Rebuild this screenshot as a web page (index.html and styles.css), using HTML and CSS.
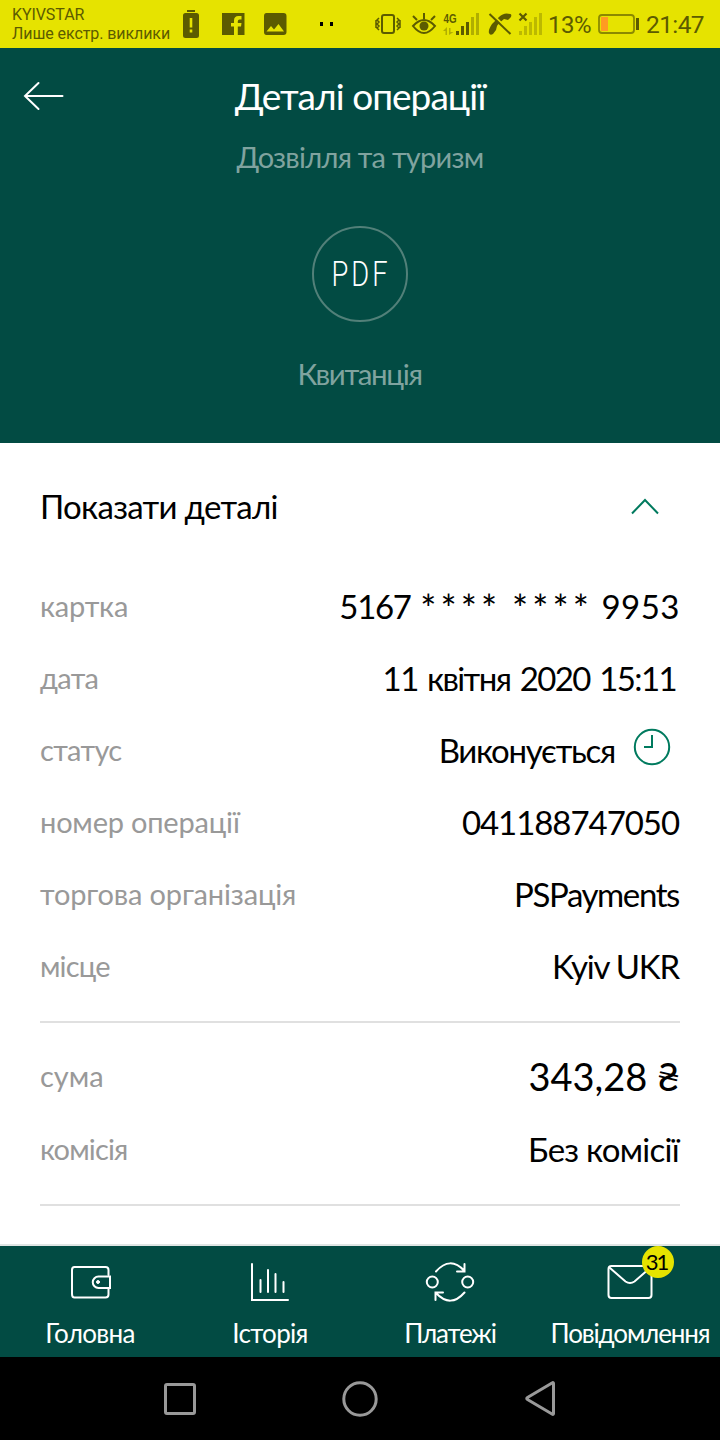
FILE: index.html
```html
<!DOCTYPE html>
<html lang="uk">
<head>
<meta charset="utf-8">
<title>Деталі операції</title>
<link rel="stylesheet" href="styles.css">
</head>
<body>
<div class="status">
  <div class="carrier"><span class="t1">KYIVSTAR</span><span class="t2">Лише екстр. виклики</span></div>
  <svg class="notes" viewBox="180 0 160 48" width="160" height="48">
    <g fill="#5c5b00">
      <path d="M187 10h8v2h-8z"/>
      <path fill-rule="evenodd" d="M185.500 13h11q2.500 0 2.500 2.500v20q0 2.500-2.500 2.500h-11q-2.500 0-2.500-2.500v-20q0-2.500 2.500-2.500zM189.700 18v9.500h2.600V18zM189.700 29.500v3h2.600v-3z"/>
      <path d="M222 13h22.500v22h-22.500z"/>
      <path fill-rule="evenodd" d="M266.500 13h17q3 0 3 3v16q0 3-3 3h-17q-2.500 0-2.500-3v-16q0-3 2.500-3zM266.500 31.500h17.500l-5.500-7.500-4.500 5.500-3-3.500z"/>
    </g>
    <path fill="#e6e300" d="M234 35v-8.500h-3v-3.500h3v-2.500q0-4.500 4.500-4.500h3v3.500h-2q-1.700 0-1.700 1.700v1.800h3.700l-.5 3.500h-3.200v8.500z"/>
    <path d="M320 22h3v4h-3zM330 22h3v4h-3z"/>
  </svg>
  <svg class="signals" viewBox="374 0 172 48" width="172" height="48">
    <g fill="none" stroke="#5c5b00" stroke-width="2">
      <rect x="382" y="15" width="12" height="18" rx="2"/>
      <path stroke-width="1.500" d="M379 18l-2 2 2 2-2 2 2 2-2 2 2 2M376 20v8M397 18l2 2-2 2 2 2-2 2 2 2-2 2M400 20v8"/>
      <path d="M413 26q11-12 22 0q-11 14-22 0zM424 19v-6M417 20l-4-4M431 20l4-4"/>
    </g>
    <circle cx="424" cy="26" r="4.500" fill="#5c5b00"/>
    <text class="net" x="443.500" y="23" textLength="13" lengthAdjust="spacingAndGlyphs">4G</text>
    <path fill="#b0ae00" d="M443 31l4-4v8h-1.500v-4zM449 28h1.500v4h3l-4.500 3zM471 17h3v18h-3zM476 13h3v22h-3z"/>
    <path fill="#5c5b00" d="M456 31h3v4h-3zM461 26h3v9h-3zM466 22h3v13h-3z"/>
    <path fill="#5c5b00" d="M499 17q5-5 11-3q2 0 1 3l-3 3-4-1q-6 5-7 7l-1 4-3 4q-3 2-4-1q-1-3 3-9z"/>
    <path stroke="#e6e300" stroke-width="2" d="M491 13l21 20"/>
    <path stroke="#5c5b00" stroke-width="2" d="M489.500 14l21 20"/>
    <path stroke="#5c5b00" stroke-width="2.200" d="M519.500 13.500l7 7M526.500 13.500l-7 7"/>
    <path fill="#bcb900" d="M519 31h3v4h-3zM524 26h3v9h-3zM529 22h3v13h-3zM534 17h3v18h-3zM539 13h3v22h-3z"/>
  </svg>
  <span class="pct">13%</span>
  <svg class="battery" viewBox="598 12 42 24" width="42" height="24">
    <rect x="599" y="15" width="35" height="18" rx="3" fill="none" stroke="#8b8900" stroke-width="1.800"/>
    <path fill="#ff9b22" d="M601 17h7v14h-7z"/><path fill="#5c5b00" d="M636 18h3v12h-3z"/>
  </svg>
  <span class="time">21:47</span>
</div>
<header class="hero">
  <div class="titlebar">
    <svg class="back" viewBox="0 0 42 30" width="42" height="30"><path d="M15.500 2L2 15l13.500 13M2 15h37.500"/></svg>
    <h1><span class="title">Деталі операції</span></h1>
  </div>
  <p class="category"><span class="cat">Дозвілля та туризм</span></p>
  <div class="pdf"><span>PDF</span></div>
  <p class="receipt"><span class="rec">Квитанція</span></p>
</header>
<main class="details">
  <div class="toggle"><span class="show">Показати деталі</span>
    <svg viewBox="0 0 30 18" width="30" height="18"><path d="M2 15.500L15 2l13 13.500"/></svg>
  </div>
  <div class="row"><span class="k k1">картка</span><span class="v v1"><span class="first">5167</span> <span class="stars">**** ****</span> <span class="lastd">9953</span></span></div>
  <div class="row"><span class="k k2">дата</span><span class="v v2">11 квітня 2020 15:11</span></div>
  <div class="row"><span class="k k3">статус</span><span class="group"><span class="v v3">Виконується</span>
    <svg class="clock" viewBox="0 0 38 38" width="38" height="38"><circle cx="19" cy="19" r="17.200"/><path d="M19 7v12h-8"/></svg></span></div>
  <div class="row"><span class="k k4">номер операції</span><span class="v v4">041188747050</span></div>
  <div class="row"><span class="k k5">торгова організація</span><span class="v v5">PSPayments</span></div>
  <div class="row"><span class="k k6">місце</span><span class="v v6">Kyiv UKR</span></div>
  <div class="rule"></div>
  <div class="row"><span class="k k7">сума</span><span class="v v7">343,28 ₴</span></div>
  <div class="row"><span class="k k8">комісія</span><span class="v v8">Без комісії</span></div>
  <div class="rule last"></div>
</main>
<nav class="tabs">
  <a class="tab"><svg viewBox="66 1258 48 48" width="48" height="48"><path d="M108.500 1275v-5q0-3-3-3h-31q-2.500 0-2.500 3v24q0 3.500 2.500 3.500h31q3 0 3-3v-5.500"/><path d="M110 1276.500h-11.500a5.700 5.700 0 0 0 0 11.500h11.500z"/><circle cx="98" cy="1282" r="1.500" fill="#fff" stroke-width="1"/></svg><span class="n1">Головна</span></a>
  <a class="tab"><svg viewBox="246 1258 48 48" width="48" height="48"><path d="M252 1264v36h36M260.500 1280v12M268 1270v22M275.500 1274v18M283.500 1282v10"/></svg><span class="n2">Історія</span></a>
  <a class="tab"><svg viewBox="424 1258 52 48" width="52" height="48"><circle cx="432.300" cy="1282" r="5.500"/><circle cx="467.700" cy="1282" r="5.500"/><path d="M436 1271.500q14-16 28.500-.5M464.500 1264v7.500h-7.500M464.500 1292.500q-14 16-28.500 .5M435.500 1300v-7.500h7.500"/></svg><span class="n3">Платежі</span></a>
  <a class="tab"><span class="mail"><svg viewBox="606 1258 48 48" width="48" height="48"><rect x="608.500" y="1266" width="43" height="32" rx="3"/><path d="M610 1268l15.500 13.500q4.500 3 9 0l15.500-13.500"/></svg><b class="badge"><span class="count">31</span></b></span><span class="n4">Повідомлення</span></a>
</nav>
<footer class="system">
  <svg viewBox="0 0 36 36" width="36" height="36"><rect x="3.500" y="3.500" width="29" height="29" rx="1.500"/></svg>
  <svg viewBox="0 0 36 36" width="36" height="36"><circle cx="18" cy="18" r="16.200"/></svg>
  <svg viewBox="0 0 36 36" width="36" height="36"><path d="M31.500 2.500v30q0 1.500-1.500 .500l-24.500-14.500q-1.500-1 0-2l24.500-14.500q1.500-1 1.500 .500z"/></svg>
</footer>
</body>
</html>
```
FILE: styles.css
```css
* { box-sizing: border-box; }
body { margin: 0; width: 720px; height: 1440px; overflow: hidden; background: #fff; font-family: Lato, "Noto Sans", sans-serif; color: #000; display: flex; flex-direction: column; }
svg { display: block; flex: none; }
h1, p { margin: 0; font-weight: 400; }
span { white-space: nowrap; }
.status { height: 48px; flex: none; background: #e6e300; color: #5c5b00; display: flex; align-items: center; font-family: Roboto, sans-serif; }
.carrier { width: 168px; margin-left: 12px; display: flex; flex-direction: column; align-items: flex-start; font-size: 16px; line-height: 19px; letter-spacing: -.08px; }
.signals { margin-left: 34px; }
.net { font: 700 13px "Liberation Sans", sans-serif; fill: #5c5b00; }
.pct { font-size: 24px; margin-left: 2px; width: 50px; letter-spacing: -.5px; padding-top: 1px; }
.time { font-size: 24.500px; margin-left: 6px; letter-spacing: -.6px; padding-top: 1px; }
.hero { height: 395px; flex: none; background: #024b43; color: #fff; display: flex; flex-direction: column; align-items: center; }
.titlebar { width: 100%; height: 94px; display: grid; grid-template-columns: 42px 1fr 42px; align-items: center; padding: 0 23px; }
.back { margin-top: 2px; fill: none; stroke: #fff; stroke-width: 2; stroke-linecap: round; }
.titlebar h1 { text-align: center; font-size: 37px; line-height: 48px; letter-spacing: -.95px; padding-top: 1px; }
.category { font-size: 29px; line-height: 32px; letter-spacing: -.75px; margin-top: -1px; color: #80a39f; }
.pdf { margin-top: 53px; width: 96px; height: 96px; border: 2px solid #528079; border-radius: 50%; display: flex; align-items: center; justify-content: center; font: 300 35px Roboto, sans-serif; letter-spacing: 4px; }
.pdf span { transform: scaleX(.78); margin-left: 2px; }
.receipt { margin-top: 35px; font-size: 29.500px; line-height: 34px; letter-spacing: -1.400px; color: #80a39f; padding-right: 1px; }
.details { height: 801px; flex: none; padding: 27px 40px 0; }
.toggle { height: 72px; margin-bottom: 28px; padding-right: 20px; display: flex; align-items: center; justify-content: space-between; font-size: 33px; letter-spacing: -.7px; }
.toggle svg { margin-top: 2px; fill: none; stroke: #007a5e; stroke-width: 2; }
.row { height: 72px; display: flex; align-items: center; justify-content: space-between; }
.k { font-size: 29px; color: #999; padding-bottom: 2px; }
.k1, .k4 { letter-spacing: -.2px; }
.k5 { letter-spacing: -.15px; }
.k2, .k3 { letter-spacing: -.65px; }
.k6, .k8 { letter-spacing: -.85px; }
.k7 { padding-bottom: 4px; }
.v { font-size: 33px; }
.v1 { line-height: 40px; }
.first { letter-spacing: -1.300px; margin-right: 1px; }
.stars { font-size: 38px; line-height: 1; vertical-align: -4px; letter-spacing: 4.100px; word-spacing: -3px; }
.lastd { letter-spacing: .5px; }
.v2 { letter-spacing: -1.600px; word-spacing: 2.500px; margin-right: 4px; }
.v3 { letter-spacing: -1.300px; }
.v4 { letter-spacing: -1.050px; margin-right: 1px; }
.v5 { letter-spacing: -1.400px; margin-right: 1px; }
.v6 { letter-spacing: -1.200px; margin-right: 1px; }
.v7 { font-size: 38px; padding-bottom: 3px; }
.v8 { letter-spacing: -.75px; margin-right: 1px; }
.group { display: flex; align-items: center; }
.clock { margin: -7px 9px 0 18px; fill: none; stroke: #007a5e; stroke-width: 2; }
.rule { height: 2px; margin: 19px 0 18px; background: #e0e0e0; }
.rule.last { margin-bottom: 0; }
.tabs { height: 113px; flex: none; background: #024b43; border-top: 2px solid #e0e5e4; display: grid; grid-template-columns: repeat(4, 1fr); color: #fff; font-size: 26px; }
.tab { display: flex; flex-direction: column; align-items: center; padding-top: 12px; }
.tab svg { fill: none; stroke: #fff; stroke-width: 2; stroke-linecap: round; margin-bottom: 10px; }
.tab > span { line-height: 34px; }
.n1, .n2 { letter-spacing: -.7px; }
.n3, .n4 { letter-spacing: -1.150px; }
.mail { position: relative; }
.badge { position: absolute; left: 36px; top: -12px; width: 32px; height: 32px; border-radius: 50%; background: #e6e300; color: #000; font-size: 22px; font-weight: 400; display: flex; align-items: center; justify-content: center; line-height: 32px; }
.count { letter-spacing: -2px; margin: -1px 0 0 -3px; }
.system { height: 83px; flex: none; background: #000; display: flex; align-items: center; justify-content: center; gap: 144px; }
.system svg { fill: none; stroke: #999; stroke-width: 3; }
```
